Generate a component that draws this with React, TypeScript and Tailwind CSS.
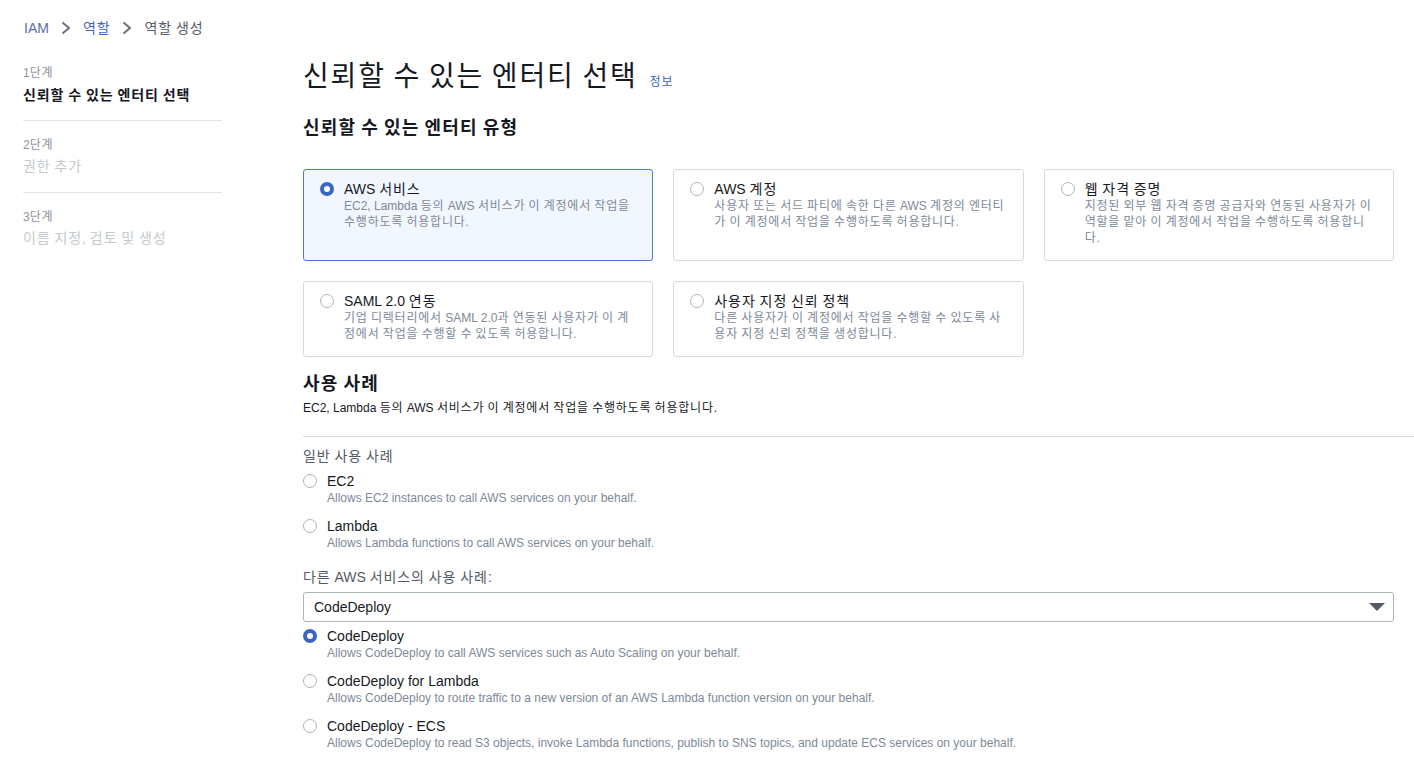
import React from 'react';

const font = { fontFamily: '"Liberation Sans", "Noto Sans CJK KR", sans-serif' };

// Hangul in Noto CJK is a bit narrower than the reference face: widen only the Hangul runs
function K({ children }: { children: string }) {
  const parts = children.split(/([\uAC00-\uD7A3]+)/);
  return (
    <>
      {parts.map((p, i) =>
        /[\uAC00-\uD7A3]/.test(p) ? (
          <span key={i} className="tracking-[0.065em]">
            {p}
          </span>
        ) : (
          <React.Fragment key={i}>{p}</React.Fragment>
        )
      )}
    </>
  );
}

function Radio({ checked }: { checked?: boolean }) {
  return checked ? (
    <span className="block w-[14px] h-[14px] shrink-0 rounded-full border-[4px] border-[#3b65c4] bg-white" />
  ) : (
    <span className="block w-[14px] h-[14px] shrink-0 rounded-full border border-[#aab7b8] bg-white" />
  );
}

function Chevron() {
  return (
    <svg width="12" height="14" viewBox="0 0 12 14" className="shrink-0">
      <path d="M2.5 1.5 L9 7 L2.5 12.5" fill="none" stroke="#687078" strokeWidth="2" />
    </svg>
  );
}

const entityTypes = [
  {
    title: 'AWS 서비스',
    desc: 'EC2, Lambda 등의 AWS 서비스가 이 계정에서 작업을 수행하도록 허용합니다.',
    checked: true,
  },
  {
    title: 'AWS 계정',
    desc: '사용자 또는 서드 파티에 속한 다른 AWS 계정의 엔터티가 이 계정에서 작업을 수행하도록 허용합니다.',
  },
  {
    title: '웹 자격 증명',
    desc: '지정된 외부 웹 자격 증명 공급자와 연동된 사용자가 이 역할을 맡아 이 계정에서 작업을 수행하도록 허용합니다.',
  },
  {
    title: 'SAML 2.0 연동',
    desc: '기업 디렉터리에서 SAML 2.0과 연동된 사용자가 이 계정에서 작업을 수행할 수 있도록 허용합니다.',
  },
  {
    title: '사용자 지정 신뢰 정책',
    desc: '다른 사용자가 이 계정에서 작업을 수행할 수 있도록 사용자 지정 신뢰 정책을 생성합니다.',
  },
];

function EntityCard({ title, desc, checked }: { title: string; desc: string; checked?: boolean }) {
  return (
    <div
      className={
        'rounded-[3px] border pl-4 pr-[14px] pt-[10px] pb-[14px] ' +
        (checked ? 'border-[#4b7bd5] bg-[#f2f7ff]' : 'border-[#d5dbdb] bg-white')
      }
    >
      <div className="flex items-start gap-[10px]">
        <div className="h-[18px] flex items-center">
          <Radio checked={checked} />
        </div>
        <div className="min-w-0">
          <div className="text-[14px] leading-[18px] text-[#16191f]">
            <K>{title}</K>
          </div>
          <div className="text-[12px] leading-[16px] text-[#7d8998]">
            <K>{desc}</K>
          </div>
        </div>
      </div>
    </div>
  );
}

function Option({ label, desc, checked, className }: { label: string; desc: string; checked?: boolean; className?: string }) {
  return (
    <div className={'flex items-start gap-[10px] ' + (className ?? '')}>
      <div className="h-[18px] flex items-center">
        <Radio checked={checked} />
      </div>
      <div>
        <div className="text-[14px] leading-[18px] text-[#16191f]">{label}</div>
        <div className="text-[12px] leading-[16px] text-[#7d8998]">{desc}</div>
      </div>
    </div>
  );
}

export default function App() {
  return (
    <div className="w-[1414px] h-[778px] overflow-hidden bg-white" style={font}>
      {/* breadcrumb */}
      <div className="flex items-center gap-[11px] pl-6 pt-[18px] h-[38px] text-[14px] leading-5">
        <span className="text-[#5b6ea8]">IAM</span>
        <Chevron />
        <span className="text-[#3b65c4]">
          <K>역할</K>
        </span>
        <Chevron />
        <span className="text-[#545b64]">
          <K>역할 생성</K>
        </span>
      </div>

      <div className="flex">
        {/* steps */}
        <div className="w-[199px] ml-[23px] pt-[27px] shrink-0">
          <div className="pb-[15px] border-b border-[#e1e4e8]">
            <div className="text-[12px] leading-4 text-[#8d969e]">
              1<K>단계</K>
            </div>
            <div className="mt-1 text-[14px] leading-5 font-bold text-[#16191f]">
              <K>신뢰할 수 있는 엔터티 선택</K>
            </div>
          </div>
          <div className="pt-4 pb-4 border-b border-[#e1e4e8]">
            <div className="text-[12px] leading-4 text-[#8d969e]">
              2<K>단계</K>
            </div>
            <div className="mt-[3px] text-[14px] leading-5 text-[#c3c9cc]">
              <K>권한 추가</K>
            </div>
          </div>
          <div className="pt-4">
            <div className="text-[12px] leading-4 text-[#8d969e]">
              3<K>단계</K>
            </div>
            <div className="mt-[3px] text-[14px] leading-5 text-[#c3c9cc]">
              <K>이름 지정, 검토 및 생성</K>
            </div>
          </div>
        </div>

        {/* main */}
        <div className="ml-[81px] flex-1 pt-[21px] pr-5">
          <div className="flex items-baseline gap-3">
            <h1 className="text-[28px] leading-9 text-[#16191f] font-normal">
              <K>신뢰할 수 있는 엔터티 선택</K>
            </h1>
            <span className="text-[12px] text-[#3b65c4]">
              <K>정보</K>
            </span>
          </div>

          <h2 className="mt-[21px] text-[18px] leading-6 font-bold text-[#16191f]">
            <K>신뢰할 수 있는 엔터티 유형</K>
          </h2>

          <div className="mt-[29px] grid grid-cols-3 gap-5">
            {entityTypes.map((e) => (
              <EntityCard key={e.title} {...e} />
            ))}
          </div>

          <h2 className="mt-[15px] text-[18px] leading-6 font-bold text-[#16191f]">
            <K>사용 사례</K>
          </h2>
          <p className="mt-1 text-[12px] leading-4 text-[#16191f]">
            <K>EC2, Lambda 등의 AWS 서비스가 이 계정에서 작업을 수행하도록 허용합니다.</K>
          </p>

          <div className="mt-5 -mr-5 border-t border-[#d5dbdb]" />

          <div className="mt-[9px] text-[14px] leading-5 text-[#545b64]">
            <K>일반 사용 사례</K>
          </div>
          <Option className="mt-[6px]" label="EC2" desc="Allows EC2 instances to call AWS services on your behalf." />
          <Option className="mt-[11px]" label="Lambda" desc="Allows Lambda functions to call AWS services on your behalf." />

          <div className="mt-4 text-[14px] leading-5 text-[#545b64]">
            <K>다른 AWS 서비스의 사용 사례:</K>
          </div>
          <div className="mt-[5px] h-[30px] flex items-center justify-between rounded-[3px] border border-[#aab7b8] pl-[10px] pr-[7px]">
            <span className="text-[14px] text-[#16191f]">CodeDeploy</span>
            <svg width="18" height="10" viewBox="0 0 18 10">
              <path d="M1 1 H17 L9 9 Z" fill="#545b64" />
            </svg>
          </div>

          <Option
            className="mt-[5px]"
            checked
            label="CodeDeploy"
            desc="Allows CodeDeploy to call AWS services such as Auto Scaling on your behalf."
          />
          <Option
            className="mt-[11px]"
            label="CodeDeploy for Lambda"
            desc="Allows CodeDeploy to route traffic to a new version of an AWS Lambda function version on your behalf."
          />
          <Option
            className="mt-[11px]"
            label="CodeDeploy - ECS"
            desc="Allows CodeDeploy to read S3 objects, invoke Lambda functions, publish to SNS topics, and update ECS services on your behalf."
          />
        </div>
      </div>
    </div>
  );
}
